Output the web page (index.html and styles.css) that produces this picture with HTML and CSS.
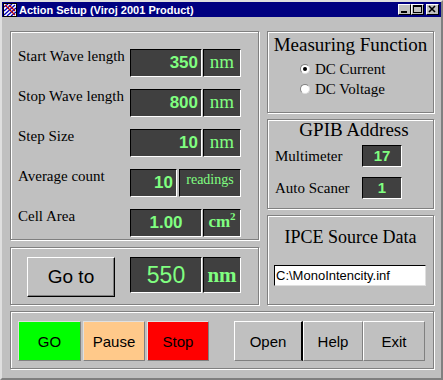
FILE: index.html
```html
<!DOCTYPE html>
<html lang="en">
<head>
<meta charset="UTF-8">
<title>Action Setup (Viroj 2001 Product)</title>
<link rel="stylesheet" href="styles.css">
</head>
<body>
<div class="window">
<div class="titlebar">
<svg class="app-icon" width="14" height="14" viewBox="0 0 14 14">
<rect x="0" y="0" width="14" height="14" fill="#fff"/>
<path d="M1 4 L5 1 M1 8 L9 1 M1 12 L12 2 M4 13 L13 5 M8 13 L13 9" stroke="#0000c0" stroke-width="1.4"/>
<path d="M2 2 L12 12 M6 2 L12 8" stroke="#c00000" stroke-width="1.2"/>
<rect x="0.5" y="0.5" width="13" height="13" fill="none" stroke="#000"/>
</svg>
<span class="title">Action Setup (Viroj 2001 Product)</span>
<div class="controls">
<span class="ctl"><svg width="11" height="9" viewBox="0 0 11 9"><rect x="2" y="6" width="6" height="2" fill="#000"/></svg></span>
<span class="ctl"><svg width="11" height="9" viewBox="0 0 11 9"><rect x="1.5" y="0.5" width="8" height="7" fill="none" stroke="#000"/><rect x="1" y="0" width="9" height="2" fill="#000"/></svg></span>
<span class="ctl ctl-close"><svg width="11" height="9" viewBox="0 0 11 9"><path d="M2 1 L8 7 M8 1 L2 7" stroke="#000" stroke-width="1.6"/></svg></span>
</div>
</div>

<div class="content">
<div class="top">
<div class="left-col">
<div class="group params">
<div class="row">
<span class="label">Start Wave length</span>
<span class="val">350</span>
<span class="unit">nm</span>
</div>
<div class="row">
<span class="label">Stop Wave length</span>
<span class="val">800</span>
<span class="unit">nm</span>
</div>
<div class="row">
<span class="label">Step Size</span>
<span class="val">10</span>
<span class="unit">nm</span>
</div>
<div class="row">
<span class="label">Average count</span>
<span class="val val-short">10</span>
<span class="unit unit-wide">readings</span>
</div>
<div class="row">
<span class="label">Cell Area</span>
<span class="val val-center">1.00</span>
<span class="unit unit-area">cm<sup>2</sup></span>
</div>
</div>
<div class="group goto">
<button class="goto-btn">Go to</button>
<span class="big-val">550</span>
<span class="big-unit">nm</span>
</div>
</div>

<div class="right-col">
<div class="group measure">
<div class="group-title">Measuring Function</div>
<label class="radio"><span class="dot checked"></span>DC Current</label>
<label class="radio"><span class="dot"></span>DC Voltage</label>
</div>
<div class="group gpib">
<div class="group-title">GPIB Address</div>
<div class="addr-row">
<span class="addr-label">Multimeter</span>
<span class="addr">17</span>
</div>
<div class="addr-row">
<span class="addr-label">Auto Scaner</span>
<span class="addr">1</span>
</div>
</div>
<div class="group source">
<div class="group-title">IPCE Source Data</div>
<div class="path-box">C:\MonoIntencity.inf</div>
</div>
</div>
</div>

<div class="group actions">
<button class="act act-go">GO</button>
<button class="act act-pause">Pause</button>
<button class="act act-stop">Stop</button>
<div class="act-spacer"></div>
<button class="act act-gray act-open">Open</button>
<button class="act act-gray act-help">Help</button>
<button class="act act-gray act-exit">Exit</button>
</div>
</div>
</div>
</body>
</html>
```

FILE: styles.css
```css
body {
margin: 0;
font-family: "Liberation Sans", Arial, sans-serif;
background-color: #c0c0c0;
}
.window {
width: 443px;
height: 380px;
box-sizing: border-box;
border: 2px solid;
border-color: #dfdfdf #808080 #808080 #dfdfdf;
background-color: #c0c0c0;
}
.titlebar {
height: 15px;
background-color: #000080;
color: #fff;
display: flex;
align-items: center;
padding: 0 2px 0 1px;
}
.app-icon {
margin-right: 2px;
flex: none;
}
.title {
font-size: 11px;
font-weight: bold;
white-space: nowrap;
}
.controls {
margin-left: auto;
display: flex;
}
.ctl {
width: 13px;
height: 11px;
box-sizing: border-box;
background-color: #c0c0c0;
border: 1px solid;
border-color: #fff #000 #000 #fff;
display: flex;
align-items: center;
justify-content: center;
}
.ctl-close {
margin-left: 2px;
}
.content {
padding: 14px 7px 0 8px;
}
.top {
display: flex;
gap: 8px;
}
.group {
border: 1px solid #808080;
box-shadow: inset 1px 1px #fff, 1px 1px #fff;
box-sizing: border-box;
}
.left-col {
width: 249px;
display: flex;
flex-direction: column;
gap: 7px;
}
.right-col {
width: 167px;
display: flex;
flex-direction: column;
gap: 6px;
}
.params {
height: 209px;
padding: 17px 0 0 7px;
display: flex;
flex-direction: column;
gap: 12px;
}
.row {
display: flex;
height: 28px;
}
.label {
width: 112px;
flex: none;
margin-top: -2px;
white-space: nowrap;
font-family: "Liberation Serif", "Times New Roman", serif;
font-size: 15px;
line-height: 18px;
color: #000;
}
.val,
.unit,
.big-val,
.big-unit,
.addr {
box-sizing: border-box;
border: 1px solid;
border-color: #000 #fff #fff #000;
background-color: #404040;
color: #80ff80;
flex: none;
}
.val {
width: 72px;
font-size: 17px;
font-weight: bold;
line-height: 26px;
text-align: right;
padding-right: 3px;
}
.val-short {
width: 47px;
}
.val-center {
text-align: center;
padding-right: 0;
}
.unit {
width: 38px;
margin-left: 1px;
font-family: "Liberation Serif", "Times New Roman", serif;
font-size: 19px;
line-height: 24px;
text-align: center;
}
.unit-wide {
width: 62px;
margin-left: 2px;
font-size: 14px;
line-height: 20px;
}
.unit-area {
font-size: 17px;
font-weight: bold;
}
.unit-area sup {
font-size: 11px;
line-height: 0;
}
.goto {
height: 58px;
padding: 9px 0 0 16px;
display: flex;
align-items: flex-start;
}
.goto-btn {
width: 88px;
height: 40px;
margin-right: 15px;
background-color: #c0c0c0;
border: 1px solid;
border-color: #fff #000 #000 #fff;
box-shadow: inset -1px -1px #808080;
font-family: "Liberation Sans", Arial, sans-serif;
font-size: 19px;
color: #000;
padding: 0;
}
.big-val {
width: 72px;
height: 36px;
font-size: 23px;
line-height: 34px;
text-align: center;
}
.big-unit {
width: 38px;
height: 36px;
margin-left: 1px;
font-family: "Liberation Serif", "Times New Roman", serif;
font-size: 21px;
font-weight: bold;
line-height: 34px;
text-align: center;
}
.group-title {
font-family: "Liberation Serif", "Times New Roman", serif;
font-size: 19px;
line-height: 20px;
text-align: center;
color: #000;
}
.measure {
height: 82px;
padding-top: 3px;
}
.measure .group-title {
margin-bottom: 4px;
}
.radio {
display: flex;
align-items: center;
height: 20px;
padding-left: 32px;
font-family: "Liberation Serif", "Times New Roman", serif;
font-size: 15px;
}
.dot {
width: 10px;
height: 10px;
box-sizing: border-box;
border-radius: 50%;
background-color: #fff;
border: 1px solid;
border-color: #808080 #dfdfdf #dfdfdf #808080;
margin-right: 5px;
position: relative;
}
.dot.checked::after {
content: "";
position: absolute;
left: 2px;
top: 2px;
width: 4px;
height: 4px;
border-radius: 50%;
background-color: #000;
}
.gpib {
height: 90px;
padding: 0 0 0 7px;
}
.gpib .group-title {
margin-bottom: 5px;
}
.addr-row {
display: flex;
align-items: center;
height: 22px;
margin-bottom: 10px;
}
.addr-label {
width: 87px;
font-family: "Liberation Serif", "Times New Roman", serif;
font-size: 15px;
}
.addr {
width: 40px;
height: 22px;
font-size: 15px;
font-weight: bold;
line-height: 20px;
text-align: center;
}
.source {
height: 90px;
padding: 11px 6px 0 6px;
}
.source .group-title {
font-size: 18px;
margin-bottom: 18px;
}
.path-box {
height: 21px;
width: 152px;
box-sizing: border-box;
background-color: #fff;
border: 1px solid;
border-color: #000 #dfdfdf #dfdfdf #000;
font-size: 13px;
line-height: 19px;
padding-left: 1px;
white-space: nowrap;
}
.actions {
margin-top: 6px;
height: 58px;
padding: 9px 0 0 7px;
display: flex;
align-items: flex-start;
}
.act {
height: 40px;
box-sizing: border-box;
border: 1px solid;
border-color: #e0e0e0 #808080 #808080 #e0e0e0;
font-family: "Liberation Sans", Arial, sans-serif;
font-size: 15px;
color: #000;
padding: 0;
margin-right: 2px;
}
.act-go {
width: 63px;
background-color: #00ff00;
}
.act-pause {
width: 62px;
background-color: #ffc98a;
}
.act-stop {
width: 62px;
background-color: #ff0000;
}
.act-spacer {
width: 23px;
}
.act-gray {
background-color: #c0c0c0;
border-color: #fff #808080 #808080 #fff;
margin-right: 0;
}
.act-open {
width: 69px;
border-right: 2px solid #000;
}
.act-help {
width: 60px;
}
.act-exit {
width: 62px;
}
```
